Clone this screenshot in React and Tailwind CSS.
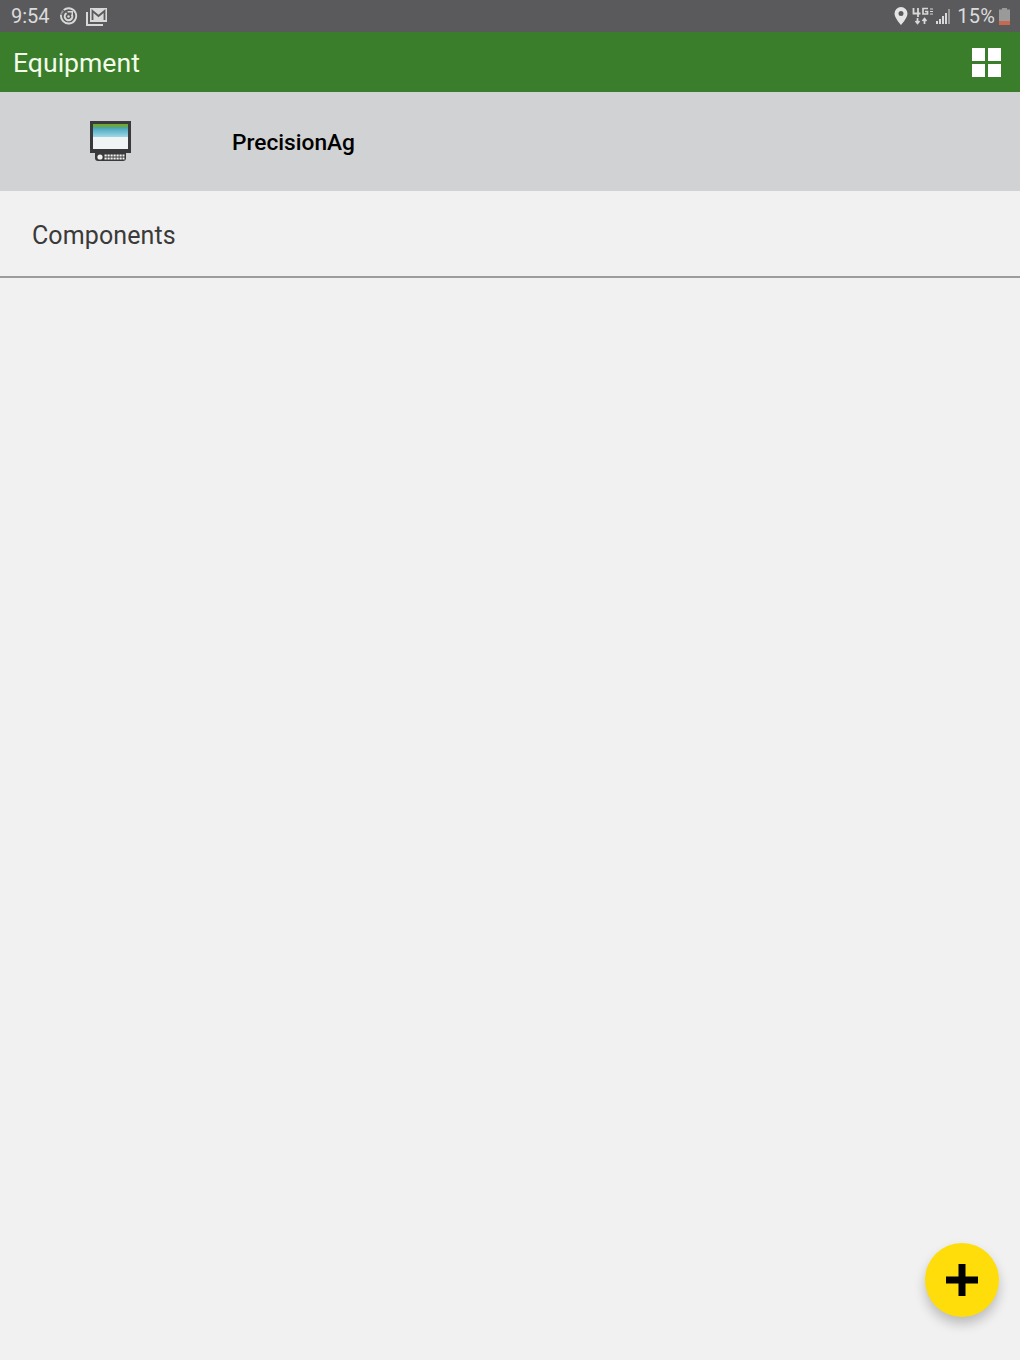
const RobotoFont = "font-['Roboto',sans-serif]";

function SyncIcon() {
    return (
        <svg width="19" height="19" viewBox="0 0 20 20" fill="none" className="ml-[9px]">
            <path d="M5 3.200A8 8 0 1 1 2.200 8" stroke="#d8d8d8" strokeWidth="2" />
            <path d="M2.400 7.500A8 8 0 0 1 4.500 4" stroke="#d8d8d8" strokeWidth="2" opacity="0.45" />
            <path d="M13.500 8A4 4 0 1 1 8 6.500" stroke="#d8d8d8" strokeWidth="2.200" />
            <path d="M9 5h5v4" stroke="#d8d8d8" strokeWidth="1.500" />
            <circle cx="10" cy="10" r="1.300" fill="#d8d8d8" />
        </svg>
    );
}

function MailIcon() {
    return (
        <svg width="22" height="19" viewBox="0 0 22 19" fill="none" className="ml-[8px]">
            <path d="M1 5v13h16" stroke="#d8d8d8" strokeWidth="2" />
            <rect x="4" y="1" width="17" height="14" fill="#d8d8d8" />
            <path d="M6.500 13V4l6 5 6-5v9" stroke="#5a5a5c" strokeWidth="1.800" />
        </svg>
    );
}

function PinIcon() {
    return (
        <svg width="14" height="18" viewBox="0 0 14 18" className="mr-[4px]">
            <path fillRule="evenodd" d="M7 0a6.500 6.500 0 0 1 6.500 6.500C13.500 11 7 18 7 18S.5 11 .5 6.500A6.500 6.500 0 0 1 7 0Zm0 4a2.500 2.500 0 1 0 0 5 2.500 2.500 0 0 0 0-5Z" fill="#e4e4e4" />
        </svg>
    );
}

function NetworkIcon() {
    return (
        <svg width="22" height="18" viewBox="0 0 22 18" fill="none" className="mr-[2px]">
            <path d="M1.500 1v5.500h7M6 1v9" stroke="#d8d8d8" strokeWidth="1.800" />
            <path d="M16 1.500h-5V7h4.500V4.500H13" stroke="#d8d8d8" strokeWidth="1.700" />
            <path d="M18 2h3M18 4.500h3M18 7h3" stroke="#d8d8d8" strokeWidth="1.200" />
            <path d="M5.500 11v5M3.500 14l2 2.500 2-2.500" stroke="#d8d8d8" strokeWidth="1.700" />
            <path d="M12.500 17v-5M10.500 14l2-2.500 2 2.500" stroke="#d8d8d8" strokeWidth="1.700" />
        </svg>
    );
}

function SignalIcon() {
    return (
        <svg width="15" height="15" viewBox="0 0 15 15" className="mr-[6px]">
            <rect x="0" y="12" width="2" height="3" fill="#d8d8d8" />
            <rect x="3" y="10" width="2" height="5" fill="#d8d8d8" />
            <rect x="6" y="7" width="2" height="8" fill="#d8d8d8" />
            <rect x="9" y="4" width="2" height="11" fill="#d8d8d8" />
            <rect x="12" y="0" width="2" height="15" fill="#9a9a9a" />
        </svg>
    );
}

function BatteryIcon() {
    return (
        <svg width="11" height="17" viewBox="0 0 11 17" className="ml-[4px]">
            <rect x="3" y="0" width="5" height="2" fill="#9a9a9a" />
            <rect x="0" y="1.500" width="11" height="15.500" fill="#9a9a9a" />
            <rect x="0" y="13" width="11" height="4" fill="#c8694f" />
        </svg>
    );
}

function DisplayIcon() {
    return (
        <svg width="44" height="44" viewBox="0 0 44 44">
            <defs>
                <linearGradient id="screenBlue" x1="0" y1="0" x2="0" y2="1">
                    <stop offset="0" stopColor="#3f9fb8" />
                    <stop offset="1" stopColor="#9fd8e6" />
                </linearGradient>
            </defs>
            <rect x="1" y="1" width="41" height="32" fill="#3a3a3c" />
            <rect x="4" y="4" width="35" height="3" fill="#6fa832" />
            <rect x="4" y="7" width="35" height="10" fill="url(#screenBlue)" />
            <rect x="4" y="17" width="35" height="12" fill="#f1f4f5" />
            <path d="M6 33h31v5a3 3 0 0 1-3 3H9a3 3 0 0 1-3-3Z" fill="#3a3a3c" />
            <circle cx="11" cy="37" r="2.600" fill="#f2f2f2" />
            <path d="M15.500 35.500h20M15.500 38.500h20" stroke="#f2f2f2" strokeWidth="2" strokeDasharray="2.200 0.800" />
        </svg>
    );
}

function GridIcon() {
    return (
        <div className="grid grid-cols-2 gap-[3px] w-[29px]">
            <div className="h-[13px] bg-white" />
            <div className="h-[13px] bg-white" />
            <div className="h-[13px] bg-white" />
            <div className="h-[13px] bg-white" />
        </div>
    );
}

export default function App() {
    return (
        <div className={`relative w-[1020px] h-[1360px] overflow-hidden bg-[#f1f1f1] ${RobotoFont}`}>
            <div className="flex items-center justify-between h-[32px] pl-[11px] pr-[10px] bg-[#5a5a5c] text-[#dcdcdc] text-[20px]">
                <div className="flex items-center">
                    <span>9:54</span>
                    <SyncIcon />
                    <MailIcon />
                </div>
                <div className="flex items-center">
                    <PinIcon />
                    <NetworkIcon />
                    <SignalIcon />
                    <span className="tracking-[0.2px]">15%</span>
                    <BatteryIcon />
                </div>
            </div>
            <div className="flex items-center justify-between h-[60px] pl-[13px] pr-[19px] bg-[#3a7d2b]">
                <h1 className="pt-[2px] text-[26.600px] text-[#f2fbe9]">Equipment</h1>
                <GridIcon />
            </div>
            <div className="flex items-center h-[99px] pl-[89px] bg-[#d1d2d4]">
                <DisplayIcon />
                <span className="ml-[99px] pt-[4px] text-[22.700px] font-medium text-black">PrecisionAg</span>
            </div>
            <div className="flex items-center h-[87px] pl-[32px] border-b-2 border-[#9c9c9c]">
                <span className="pt-[4px] text-[25px] tracking-[0.1px] text-[#3a3a3a]">Components</span>
            </div>
            <button type="button" className="absolute left-[925px] top-[1243px] flex items-center justify-center w-[74px] h-[74px] rounded-full bg-[#fedd0a] shadow-[0_7px_12px_rgba(0,0,0,0.22)]">
                <svg width="32" height="32" viewBox="0 0 32 32">
                    <path d="M12.500 0h7v12.500H32v7H19.500V32h-7V19.500H0v-7h12.500Z" fill="#000" />
                </svg>
            </button>
        </div>
    );
}
